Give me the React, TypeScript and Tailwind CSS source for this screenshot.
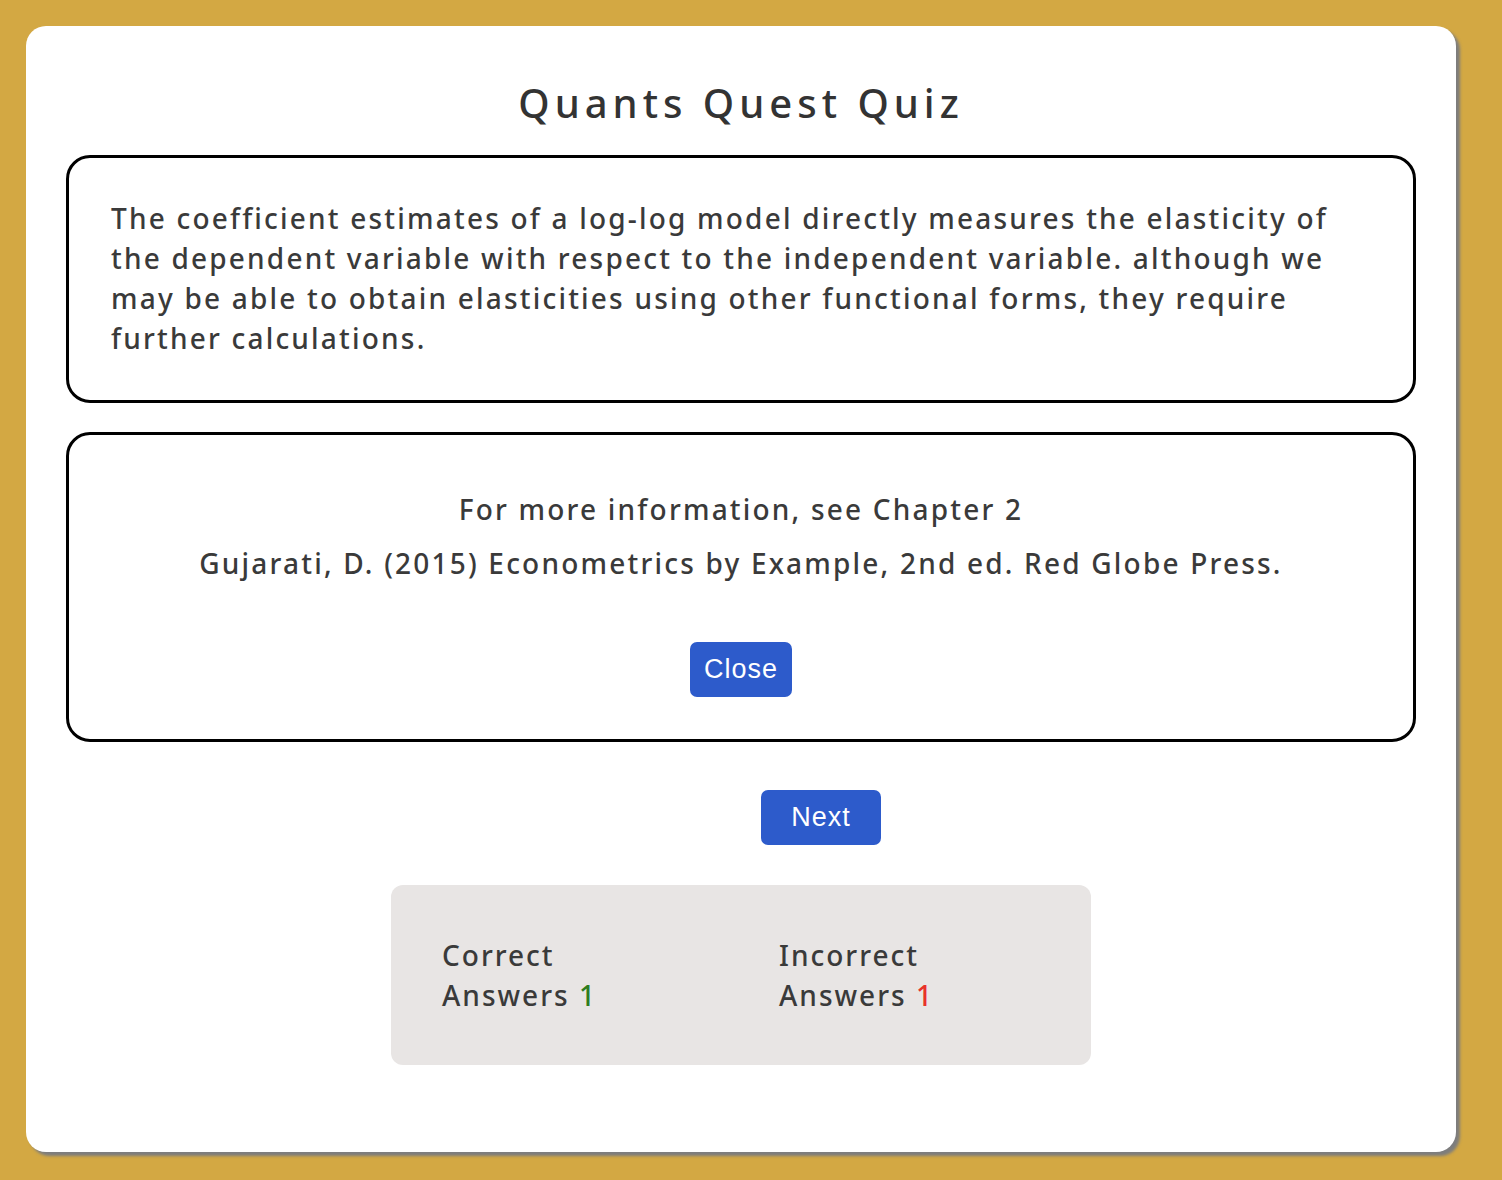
import React from "react";

export default function App() {
  const body = { fontFamily: '"Noto Sans", "Open Sans", sans-serif' };
  const btn = { fontFamily: '"Liberation Sans", Arial, sans-serif' };
  return (
    <div className="w-[1502px] h-[1180px] bg-[#d3a843] pt-[26px] pl-[26px]">
      <div className="w-[1430px] h-[1126px] bg-white rounded-[20px] shadow-[4px_4px_3px_#7d7d7d] flex flex-col px-[40px]" style={body}>
        <h1 className="h-[129px] pt-[53px] text-center text-[40px] leading-[48px] tracking-[5px] font-medium text-[#333333]">
          Quants Quest Quiz
        </h1>
        <div className="h-[248px] border-[3px] border-black rounded-[24px] pl-[42px] pr-[20px] pt-[40px] text-[28px] leading-[40px] font-medium tracking-[2.2px] text-[#3a3a3a] whitespace-nowrap">
          The coefficient estimates of a log-log model directly measures the elasticity of
          <br />
          the dependent variable with respect to the independent variable. although we
          <br />
          may be able to obtain elasticities using other functional forms, they require
          <br />
          further calculations.
        </div>
        <div className="mt-[29px] h-[310px] border-[3px] border-black rounded-[24px] flex flex-col items-center pt-[54px] text-[28px] font-medium tracking-[2.2px] text-[#3a3a3a]">
          <p className="leading-[40px]">For more information, see Chapter 2</p>
          <p className="leading-[40px] mt-[14px]">Gujarati, D. (2015) Econometrics by Example, 2nd ed. Red Globe Press.</p>
          <button
            className="mt-[59px] w-[102px] h-[55px] rounded-[7px] bg-[#2d5bcb] text-white text-[27px] font-medium tracking-[1px]"
            style={btn}
          >
            Close
          </button>
        </div>
        <div className="flex justify-center pl-[160px] mt-[48px]">
          <button
            className="w-[120px] h-[55px] rounded-[7px] bg-[#2d5bcb] text-white text-[27px] font-medium tracking-[1px]"
            style={btn}
          >
            Next
          </button>
        </div>
        <div className="mx-auto mt-[40px] w-[700px] h-[180px] rounded-[12px] bg-[#e8e5e4] flex items-center pl-[51px] text-[28px] leading-[40px] font-medium tracking-[2px] text-[#3a3a3a]">
          <div className="w-[337px]">
            Correct
            <br />
            Answers <span className="text-[#2e7d1f]">1</span>
          </div>
          <div>
            Incorrect
            <br />
            Answers <span className="text-[#e8322a]">1</span>
          </div>
        </div>
      </div>
    </div>
  );
}
